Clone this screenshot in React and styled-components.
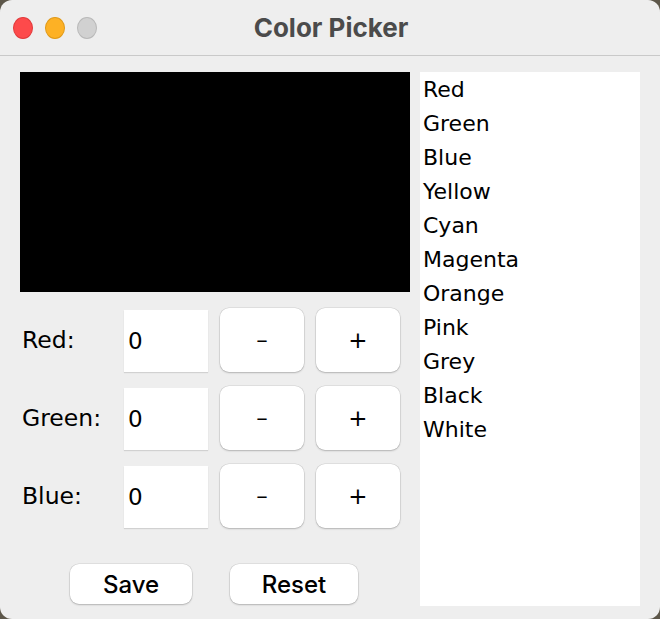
import styled, { createGlobalStyle } from 'styled-components';

const GlobalStyle = createGlobalStyle`
    html, body {
        margin: 0;
        padding: 0;
        background: #5d574a;
    }
`;

const Window = styled.div`
    width: 660px;
    height: 619px;
    background: #eeeeee;
    border-radius: 12px;
    overflow: hidden;
    display: flex;
    flex-direction: column;
`;

const TitleBar = styled.div`
    height: 55px;
    border-bottom: 1px solid #c9c9c9;
    display: flex;
    align-items: center;
    justify-content: center;
    position: relative;
    font-family: Inter, "Noto Sans", sans-serif;
    font-size: 26px;
    font-weight: 700;
    color: #4b4b4b;
    padding-left: 2px;
`;

const Lights = styled.div`
    position: absolute;
    left: 13px;
    top: 17px;
    display: flex;
    gap: 12px;
`;

const Light = styled.span`
    width: 20px;
    height: 22px;
    border-radius: 50%;
    box-sizing: border-box;
    background: ${p => p.color};
    border: 1px solid ${p => p.edge};
`;

const Content = styled.div`
    flex: 1;
    display: flex;
    gap: 10px;
    padding: 16px 20px 13px 20px;
`;

const LeftColumn = styled.div`
    width: 390px;
    display: flex;
    flex-direction: column;
`;

const Preview = styled.div`
    height: 220px;
    background: rgb(${p => p.r}, ${p => p.g}, ${p => p.b});
    margin-bottom: 16px;
`;

const Row = styled.div`
    height: 64px;
    display: flex;
    align-items: center;
    margin-bottom: 14px;
`;

const Label = styled.div`
    width: 102px;
    padding-left: 2px;
    font-family: "DejaVu Sans", sans-serif;
    font-size: 23.5px;
    color: #000;
`;

const Field = styled.div`
    width: 84px;
    height: 62px;
    margin-top: 2px;
    box-sizing: border-box;
    padding-left: 4px;
    background: #fff;
    box-shadow: 0 1px 1px rgba(0, 0, 0, 0.12);
    display: flex;
    align-items: center;
    font-family: "DejaVu Sans", sans-serif;
    font-size: 23px;
    color: #000;
`;

const StepButton = styled.button`
    width: 84px;
    height: 64px;
    margin-left: 12px;
    border: none;
    border-radius: 9px;
    background: #fff;
    box-shadow: 0 0 0 0.5px rgba(0, 0, 0, 0.12), 0 1px 2px rgba(0, 0, 0, 0.2);
    font-family: "DejaVu Sans", sans-serif;
    font-size: 23px;
    color: #000;
    padding: 0;
`;

const Actions = styled.div`
    display: flex;
    gap: 38px;
    padding-left: 50px;
    margin-top: 22px;
`;

const ActionButton = styled.button`
    width: ${p => p.w}px;
    height: 40px;
    border: none;
    border-radius: 9px;
    background: #fff;
    box-shadow: 0 0 0 0.5px rgba(0, 0, 0, 0.12), 0 1px 2px rgba(0, 0, 0, 0.2);
    font-family: Inter, "Noto Sans", sans-serif;
    font-size: 24px;
    font-weight: 500;
    color: #000;
    padding: 0;
`;

const ColorList = styled.ul`
    width: 220px;
    margin: 0;
    padding: 1px 0 0 3px;
    box-sizing: border-box;
    list-style: none;
    background: #fff;
`;

const ColorItem = styled.li`
    height: 34px;
    line-height: 34px;
    font-family: "DejaVu Sans", sans-serif;
    font-size: 22px;
    color: #000;
`;

const colors = ['Red', 'Green', 'Blue', 'Yellow', 'Cyan', 'Magenta', 'Orange', 'Pink', 'Grey', 'Black', 'White'];
const channels = [['Red:', 0], ['Green:', 0], ['Blue:', 0]];

const App = () => {
    return (
        <>
            <GlobalStyle />
            <Window>
                <TitleBar>
                    <Lights>
                        <Light color="#fd4a4b" edge="#e23b3c" />
                        <Light color="#fdb125" edge="#e09a1a" />
                        <Light color="#d1d1d1" edge="#b9b9b9" />
                    </Lights>
                    Color Picker
                </TitleBar>
                <Content>
                    <LeftColumn>
                        <Preview r={0} g={0} b={0} />
                        {channels.map(([label, value]) => (
                            <Row key={label}>
                                <Label>{label}</Label>
                                <Field>{value}</Field>
                                <StepButton>–</StepButton>
                                <StepButton>+</StepButton>
                            </Row>
                        ))}
                        <Actions>
                            <ActionButton w={122}>Save</ActionButton>
                            <ActionButton w={128}>Reset</ActionButton>
                        </Actions>
                    </LeftColumn>
                    <ColorList>
                        {colors.map(c => <ColorItem key={c}>{c}</ColorItem>)}
                    </ColorList>
                </Content>
            </Window>
        </>
    );
};

export default App;
